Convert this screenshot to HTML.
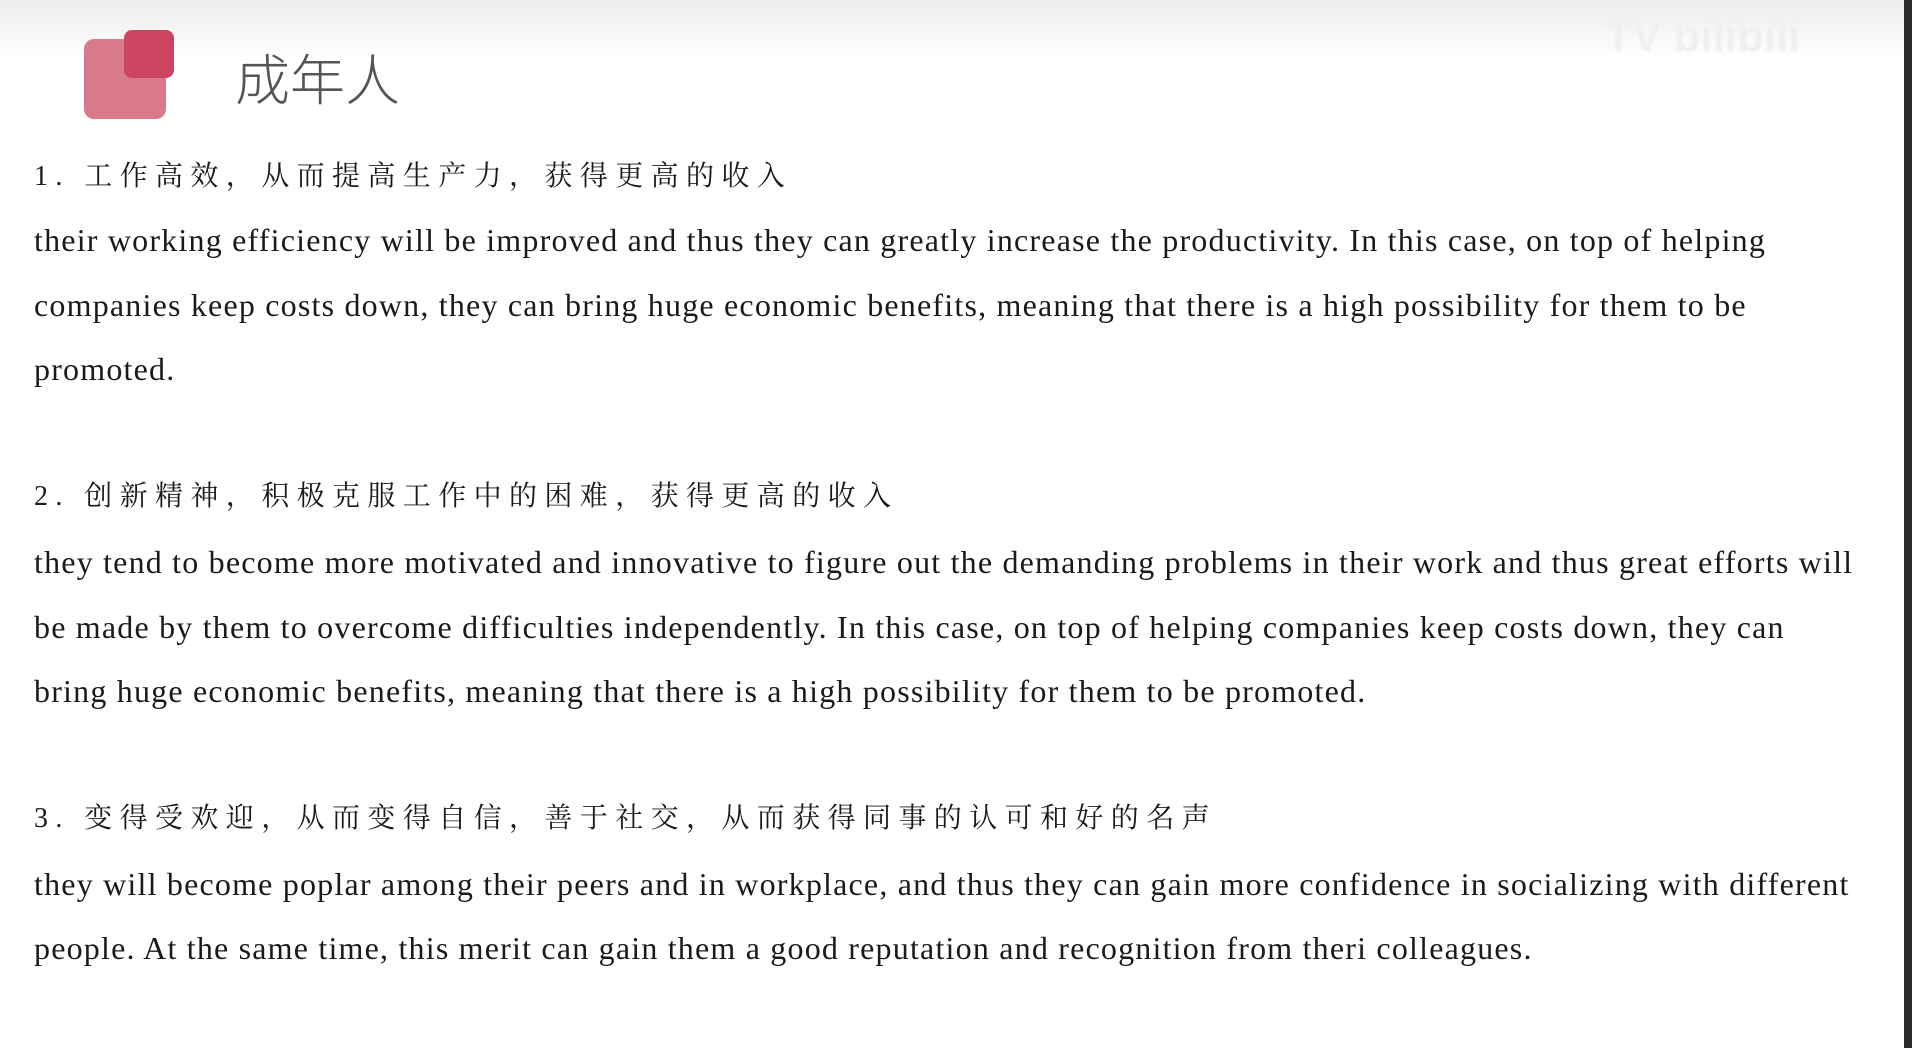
<!DOCTYPE html>
<html><head><meta charset="utf-8"><style>
body{margin:0;width:1912px;height:1048px;background:#fff;position:relative;overflow:hidden}
.top{position:absolute;left:0;top:0;width:1912px;height:60px;background:linear-gradient(#ececec,#fff)}
.bar{position:absolute;right:0;top:0;width:8px;height:1048px;background:#2a2a2a}
.l{position:absolute;left:34px;white-space:nowrap;color:#1a1a1a}
.e{font-family:"Liberation Serif",serif;font-size:32px;line-height:40px;letter-spacing:1.2px}
.c{font-family:"Liberation Serif","Noto Serif CJK SC",serif;font-size:28px;line-height:40px;letter-spacing:7.4px}
</style></head><body>
<div class="top"></div>
<div class="bar"></div>
<div style="position:absolute;left:1605px;top:12px;font-family:'Liberation Sans',sans-serif;font-size:44px;font-weight:bold;color:#f0f0f0">TV bilibili</div>
<div style="position:absolute;left:84px;top:39px;width:82px;height:80px;border-radius:10px;background:#d97a8a"></div>
<div style="position:absolute;left:124px;top:30px;width:50px;height:48px;border-radius:8px;background:#cc4560"></div>
<div style="position:absolute;left:235px;top:44px;font-family:'Noto Sans CJK SC',sans-serif;font-size:55px;font-weight:300;color:#555;line-height:64px">成年人</div>

<div class="l c" style="top:157px">1. 工作高效，从而提高生产力，获得更高的收入</div>
<div class="l e" style="top:220px">their working efficiency will be improved and thus they can greatly increase the productivity. In this case, on top of helping</div>
<div class="l e" style="top:285px">companies keep costs down, they can bring huge economic benefits, meaning that there is a high possibility for them to be</div>
<div class="l e" style="top:349px">promoted.</div>

<div class="l c" style="top:477px">2. 创新精神，积极克服工作中的困难，获得更高的收入</div>
<div class="l e" style="top:542px">they tend to become more motivated and innovative to figure out the demanding problems in their work and thus great efforts will</div>
<div class="l e" style="top:607px">be made by them to overcome difficulties independently. In this case, on top of helping companies keep costs down, they can</div>
<div class="l e" style="top:671px">bring huge economic benefits, meaning that there is a high possibility for them to be promoted.</div>

<div class="l c" style="top:799px">3. 变得受欢迎，从而变得自信，善于社交，从而获得同事的认可和好的名声</div>
<div class="l e" style="top:864px">they will become poplar among their peers and in workplace, and thus they can gain more confidence in socializing with different</div>
<div class="l e" style="top:928px">people. At the same time, this merit can gain them a good reputation and recognition from theri colleagues.</div>
</body></html>
